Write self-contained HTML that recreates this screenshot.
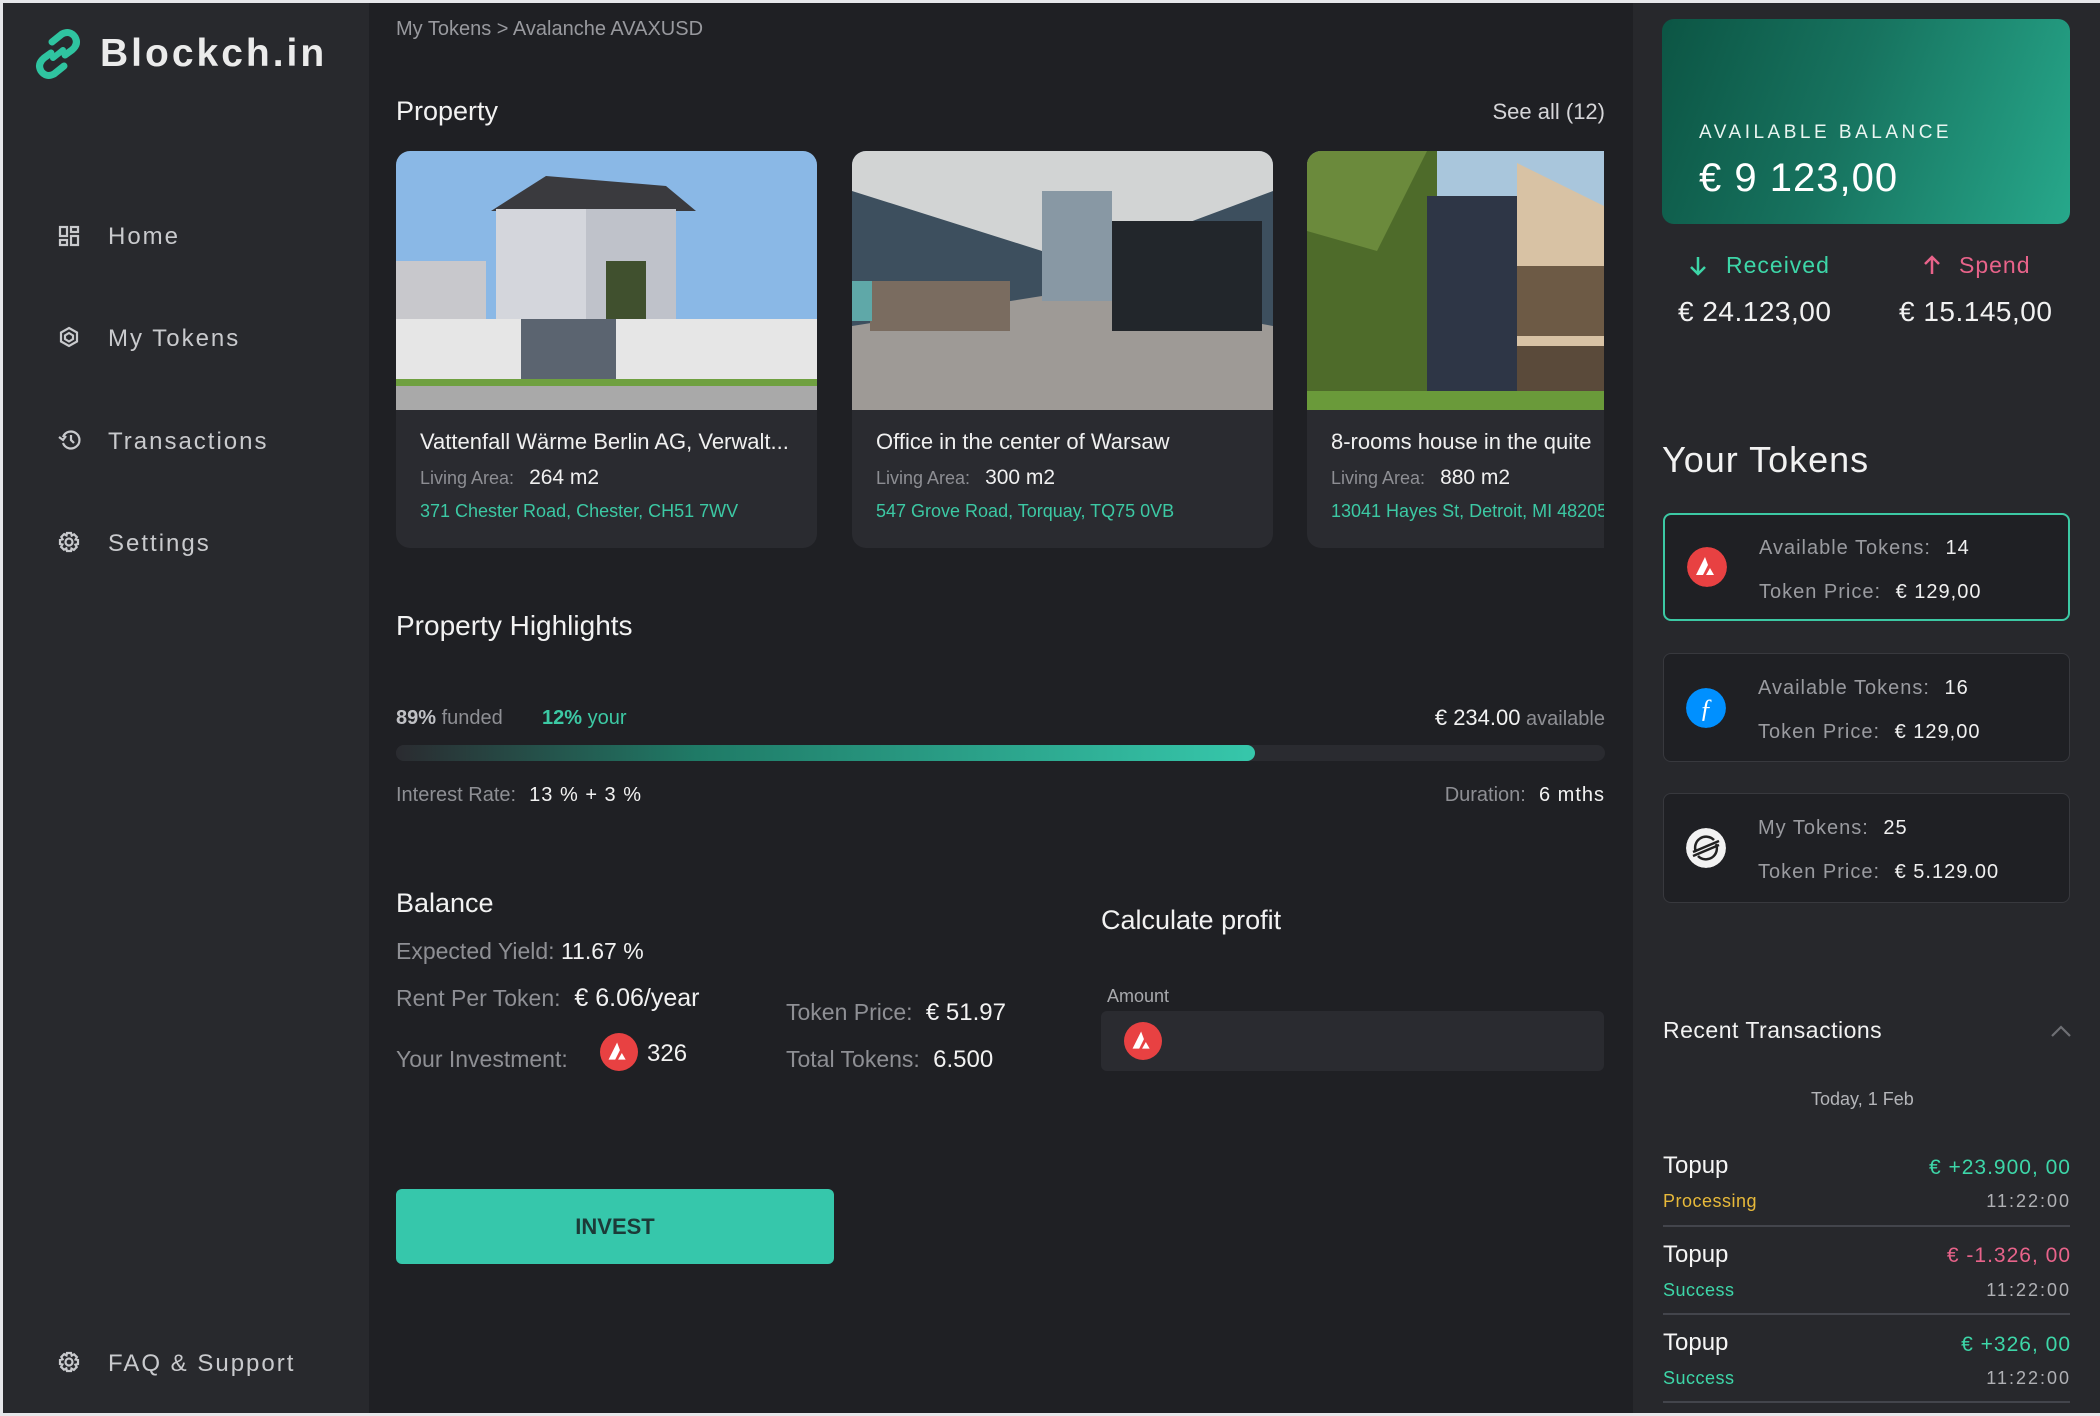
<!DOCTYPE html>
<html><head><meta charset="utf-8">
<style>
*{margin:0;padding:0;box-sizing:border-box}
body{width:2100px;height:1416px;background:#e6e7ea;position:relative;overflow:hidden;font-family:"Liberation Sans",sans-serif}
.a{position:absolute;white-space:nowrap;line-height:1}
#side{position:absolute;left:3px;top:3px;width:366px;height:1410px;background:#28292d}
#main{position:absolute;left:369px;top:3px;width:1264px;height:1410px;background:#1f2024}
#right{position:absolute;left:1633px;top:3px;width:1464px;height:1410px;background:#27282c}
.nav{color:#c9cacd;font-size:24px;letter-spacing:2px;left:108px}
.navi{position:absolute;left:58px}
.card{position:absolute;top:151px;height:397px;background:#2a2b30;border-radius:14px;overflow:hidden}
.img{position:absolute;left:0;top:0;right:0;height:259px}
.ct{color:#f0f0f0;font-size:22px;left:24px;top:280px}
.cl{left:24px;top:316px;font-size:18px;color:#8d8e93}
.cl b{font-weight:normal;color:#f0f0f0;font-size:21px;margin-left:10px}
.cad{left:24px;top:351px;font-size:18px;color:#3cc9a4}
.g{color:#8e8f94}
.w{color:#f2f2f2}
.tk{position:absolute;left:1663px;width:407px;background:#1f2024;border:1.5px solid #38393e;border-radius:8px}
.tk .ic{position:absolute;left:22px;width:40px;height:40px;border-radius:50%}
.tk .l1,.tk .l2{position:absolute;left:94px;font-size:20px;color:#9a9ba0;letter-spacing:1px;line-height:1;white-space:nowrap}
.tk b{font-weight:normal;color:#f0f0f0;margin-left:8px}
.tr{font-size:24px;color:#f5f5f5;left:1663px}
.st{font-size:18px;left:1663px;letter-spacing:.5px}
.am{font-size:21px;right:29px;letter-spacing:1px}
.tm{font-size:18px;right:29px;color:#b0b1b5;letter-spacing:2px}
.dv{position:absolute;left:1663px;width:407px;height:2px;background:#43454c}
</style></head><body>
<div id="side"></div><div id="main"></div><div id="right"></div>

<!-- logo -->
<svg class="a" style="left:32px;top:28px" width="52" height="52" viewBox="0 0 52 52">
<g fill="none" stroke="#2fc4a0" stroke-width="7" stroke-linecap="round">
<path d="M20 14 L30 6 Q38 2 43 9 Q47 16 40 22 L33 27"/>
<path d="M32 38 L22 46 Q14 50 9 43 Q5 36 12 30 L19 25"/>
<path d="M21 30 L31 22" stroke-width="6"/>
</g></svg>
<div class="a" style="left:100px;top:34px;font-size:39px;font-weight:bold;color:#ebebeb;letter-spacing:3px">Blockch.in</div>

<!-- nav -->
<svg class="navi" style="top:225px" width="22" height="22" viewBox="0 0 22 22" fill="none" stroke="#c9cacd" stroke-width="2.2"><rect x="2" y="2" width="7" height="9"/><rect x="13" y="2" width="7" height="5"/><rect x="2" y="15" width="7" height="5"/><rect x="13" y="11" width="7" height="9"/></svg>
<div class="a nav" style="top:225px">Home</div>
<svg class="navi" style="top:326px" width="22" height="22" viewBox="0 0 22 22" fill="none" stroke="#c9cacd" stroke-width="2.2"><path d="M11 2 L19 6.5 V15.5 L11 20 L3 15.5 V6.5 Z"/><path d="M11 7 L15 9.5 V13 L11 15.5 L7 13 V9.5 Z"/></svg>
<div class="a nav" style="top:327px">My Tokens</div>
<svg class="navi" style="top:429px" width="24" height="22" viewBox="0 0 24 22" fill="none" stroke="#c9cacd" stroke-width="2.2"><path d="M5 8 A8.5 8.5 0 1 1 5 14"/><path d="M1 8 L5 11 L8 7"/><path d="M13 6 V11 L16 14"/></svg>
<div class="a nav" style="top:430px">Transactions</div>
<svg class="navi" style="top:531px" width="22" height="22" viewBox="0 0 22 22" fill="none" stroke="#c9cacd" stroke-width="2.2"><circle cx="11" cy="11" r="3.5"/><path d="M9 2h4l.7 2.6 2.4-1.3 2.8 2.8-1.3 2.4L20 9v4l-2.6.7 1.3 2.4-2.8 2.8-2.4-1.3L13 20H9l-.7-2.6-2.4 1.3-2.8-2.8 1.3-2.4L2 13V9l2.6-.7-1.3-2.4 2.8-2.8 2.4 1.3z"/></svg>
<div class="a nav" style="top:532px">Settings</div>
<svg class="navi" style="top:1351px" width="22" height="22" viewBox="0 0 22 22" fill="none" stroke="#c9cacd" stroke-width="2.2"><circle cx="11" cy="11" r="3.5"/><path d="M9 2h4l.7 2.6 2.4-1.3 2.8 2.8-1.3 2.4L20 9v4l-2.6.7 1.3 2.4-2.8 2.8-2.4-1.3L13 20H9l-.7-2.6-2.4 1.3-2.8-2.8 1.3-2.4L2 13V9l2.6-.7-1.3-2.4 2.8-2.8 2.4 1.3z"/></svg>
<div class="a nav" style="top:1352px">FAQ &amp; Support</div>

<!-- main -->
<div class="a" style="left:396px;top:19px;font-size:20px;color:#98999e">My Tokens &gt; Avalanche AVAXUSD</div>
<div class="a w" style="left:396px;top:98px;font-size:27px">Property</div>
<div class="a" style="right:495px;top:101px;font-size:22px;color:#d5d5d8">See all (12)</div>

<div class="card" style="left:396px;width:421px">
 <svg class="img" width="421" height="259" viewBox="0 0 421 259" preserveAspectRatio="none">
  <rect width="421" height="259" fill="#8ab8e6"/>
  <rect y="180" width="421" height="79" fill="#d8d8d8"/>
  <rect y="232" width="421" height="27" fill="#a9a9a9"/>
  <rect y="225" width="421" height="10" fill="#6fa040"/>
  <rect x="0" y="110" width="90" height="80" fill="#c8c8cc"/>
  <path d="M95 60 L150 25 L270 35 L300 60 Z" fill="#3a3a3e"/>
  <rect x="100" y="58" width="175" height="130" fill="#d4d6dc"/>
  <rect x="190" y="58" width="90" height="130" fill="#bfc2ca"/>
  <rect x="210" y="110" width="40" height="80" fill="#40502e"/>
  <rect x="0" y="168" width="421" height="60" fill="#e6e6e6"/>
  <rect x="125" y="168" width="95" height="60" fill="#5b6470"/>
 </svg>
 <div class="a ct">Vattenfall Wärme Berlin AG, Verwalt...</div>
 <div class="a cl">Living Area: <b>264 m2</b></div>
 <div class="a cad">371 Chester Road, Chester, CH51 7WV</div>
</div>

<div class="card" style="left:852px;width:421px">
 <svg class="img" width="421" height="259" viewBox="0 0 421 259" preserveAspectRatio="none">
  <rect width="421" height="259" fill="#3d4f5e"/>
  <path d="M0 0 H421 V40 L260 100 H190 L0 40 Z" fill="#d2d4d4"/>
  <path d="M0 175 L190 145 H260 L421 175 V259 H0 Z" fill="#9e9a96"/>
  <rect x="190" y="40" width="70" height="110" fill="#8898a4"/>
  <rect x="260" y="70" width="150" height="110" fill="#22262b"/>
  <rect x="18" y="130" width="140" height="50" fill="#7a6c60"/>
  <rect x="0" y="130" width="20" height="40" fill="#5fa8a8"/>
 </svg>
 <div class="a ct">Office in the center of Warsaw</div>
 <div class="a cl">Living Area: <b>300 m2</b></div>
 <div class="a cad">547 Grove Road, Torquay, TQ75 0VB</div>
</div>

<div class="card" style="left:1307px;width:297px;border-radius:14px 0 0 14px">
 <svg class="img" width="297" height="259" viewBox="0 0 297 259" preserveAspectRatio="none">
  <rect width="297" height="259" fill="#a9c6dc"/>
  <rect x="0" y="0" width="130" height="259" fill="#4e6b2a"/>
  <path d="M0 0 H120 L90 60 L70 100 L0 80Z" fill="#6b8a3c"/>
  <rect x="120" y="45" width="90" height="200" fill="#2e3646"/>
  <path d="M210 12 L297 55 V240 H210 Z" fill="#d8c2a4"/>
  <rect x="210" y="115" width="87" height="70" fill="#6d5a45"/>
  <rect x="210" y="195" width="87" height="45" fill="#5a4a3a"/>
  <rect y="240" width="297" height="19" fill="#6a9a3a"/>
 </svg>
 <div class="a ct">8-rooms house in the quite</div>
 <div class="a cl">Living Area: <b>880 m2</b></div>
 <div class="a cad">13041 Hayes St, Detroit, MI 48205</div>
</div>

<div class="a w" style="left:396px;top:612px;font-size:28px">Property Highlights</div>
<div class="a" style="left:396px;top:708px;font-size:20px"><b style="color:#c0c1c5">89%</b><span class="g"> funded</span></div>
<div class="a" style="left:542px;top:708px;font-size:20px"><b style="color:#3cc9a4">12%</b><span style="color:#3cc9a4"> your</span></div>
<div class="a" style="right:495px;top:707px;font-size:22px"><span class="w">€ 234.00</span><span class="g" style="font-size:20px"> available</span></div>
<div style="position:absolute;left:396px;top:745px;width:1209px;height:16px;border-radius:8px;background:#2a2b30"></div>
<div style="position:absolute;left:396px;top:745px;width:859px;height:16px;border-radius:8px;background:linear-gradient(90deg,#2a2b30,#1f7a66 35%,#36c7ab)"></div>
<div class="a" style="left:396px;top:785px;font-size:20px"><span class="g">Interest Rate:</span><span class="w" style="letter-spacing:1px">&nbsp; 13 % + 3 %</span></div>
<div class="a" style="right:495px;top:785px;font-size:20px"><span class="g">Duration:</span><span class="w" style="letter-spacing:1px">&nbsp; 6 mths</span></div>

<div class="a w" style="left:396px;top:890px;font-size:27px">Balance</div>
<div class="a" style="left:396px;top:940px;font-size:23px"><span class="g">Expected Yield:</span><span class="w"> 11.67 %</span></div>
<div class="a" style="left:396px;top:986px;font-size:23px"><span class="g">Rent Per Token:</span><span class="w" style="font-size:25px">&nbsp; € 6.06/year</span></div>
<div class="a" style="left:396px;top:1048px;font-size:23px"><span class="g">Your Investment:</span></div>
<svg class="a" style="left:600px;top:1033px" width="38" height="38" viewBox="0 0 40 40"><circle cx="20" cy="20" r="20" fill="#e84142"/><path d="M18 10 L9 28 H16 L21 18 Z M23 21 L19 28 H27 Z" fill="#fff"/></svg>
<div class="a w" style="left:647px;top:1042px;font-size:24px">326</div>
<div class="a" style="left:786px;top:1001px;font-size:23px"><span class="g">Token Price:</span><span class="w" style="font-size:24px">&nbsp; € 51.97</span></div>
<div class="a" style="left:786px;top:1048px;font-size:23px"><span class="g">Total Tokens:</span><span class="w" style="font-size:24px">&nbsp; 6.500</span></div>

<div class="a w" style="left:1101px;top:907px;font-size:27px">Calculate profit</div>
<div class="a" style="left:1107px;top:987px;font-size:18px;color:#a8a9ad">Amount</div>
<div style="position:absolute;left:1101px;top:1011px;width:503px;height:60px;border-radius:6px;background:#2a2b30"></div>
<svg class="a" style="left:1124px;top:1022px" width="38" height="38" viewBox="0 0 40 40"><circle cx="20" cy="20" r="20" fill="#e84142"/><path d="M18 10 L9 28 H16 L21 18 Z M23 21 L19 28 H27 Z" fill="#fff"/></svg>

<div style="position:absolute;left:396px;top:1189px;width:438px;height:75px;border-radius:6px;background:#36c7ab;color:#1c3b38;font-size:22px;font-weight:bold;text-align:center;line-height:75px">INVEST</div>

<!-- right -->
<div style="position:absolute;left:1662px;top:19px;width:408px;height:205px;border-radius:12px;background:linear-gradient(110deg,#0c5544 0%,#17735f 45%,#27a88b 100%)"></div>
<div class="a" style="left:1699px;top:123px;font-size:19px;color:#eaf5f1;letter-spacing:3.5px">AVAILABLE BALANCE</div>
<div class="a" style="left:1699px;top:158px;font-size:40px;color:#fff;letter-spacing:1px">€ 9 123,00</div>

<svg class="a" style="left:1688px;top:255px" width="20" height="22" viewBox="0 0 20 22" fill="none" stroke="#3dd6a8" stroke-width="2.5"><path d="M10 2 V19 M3 12 L10 19 L17 12"/></svg>
<div class="a" style="left:1726px;top:254px;font-size:23px;color:#3dd6a8;letter-spacing:1px">Received</div>
<svg class="a" style="left:1922px;top:254px" width="20" height="22" viewBox="0 0 20 22" fill="none" stroke="#e8638a" stroke-width="2.5"><path d="M10 20 V3 M3 10 L10 3 L17 10"/></svg>
<div class="a" style="left:1959px;top:254px;font-size:23px;color:#e8638a;letter-spacing:1px">Spend</div>
<div class="a w" style="left:1678px;top:298px;font-size:28px;letter-spacing:.5px">€ 24.123,00</div>
<div class="a w" style="left:1899px;top:298px;font-size:28px;letter-spacing:.5px">€ 15.145,00</div>

<div class="a w" style="left:1662px;top:442px;font-size:36px;letter-spacing:1px">Your Tokens</div>

<div class="tk" style="top:513px;height:108px;border:2.5px solid #3cc9a4">
 <svg class="ic" style="top:32px" viewBox="0 0 40 40"><circle cx="20" cy="20" r="20" fill="#e84142"/><path d="M18 10 L9 28 H16 L21 18 Z M23 21 L19 28 H27 Z" fill="#fff"/></svg>
 <div class="l1" style="top:23px">Available Tokens: <b>14</b></div>
 <div class="l2" style="top:67px">Token Price: <b>€ 129,00</b></div>
</div>
<div class="tk" style="top:653px;height:109px">
 <svg class="ic" style="top:34px" viewBox="0 0 40 40"><circle cx="20" cy="20" r="20" fill="#0090ff"/><text x="20" y="29" text-anchor="middle" font-family="Liberation Serif,serif" font-style="italic" font-size="26" fill="#fff">ƒ</text></svg>
 <div class="l1" style="top:24px">Available Tokens: <b>16</b></div>
 <div class="l2" style="top:68px">Token Price: <b>€ 129,00</b></div>
</div>
<div class="tk" style="top:793px;height:110px">
 <svg class="ic" style="top:34px" viewBox="0 0 40 40"><circle cx="20" cy="20" r="20" fill="#f2f2f2"/><g fill="none" stroke="#222" stroke-width="2.5"><path d="M10 24 A11 11 0 0 1 28 12"/><path d="M30 16 A11 11 0 0 1 12 28"/><path d="M7 24 L33 13"/><path d="M7 28 L33 17"/></g></svg>
 <div class="l1" style="top:24px">My Tokens: <b>25</b></div>
 <div class="l2" style="top:68px">Token Price: <b>€ 5.129.00</b></div>
</div>

<div class="a w" style="left:1663px;top:1019px;font-size:23px;letter-spacing:.5px">Recent Transactions</div>
<svg class="a" style="left:2050px;top:1024px" width="22" height="14" viewBox="0 0 22 14" fill="none" stroke="#6e6f74" stroke-width="2.2"><path d="M2 12 L11 3 L20 12"/></svg>
<div class="a" style="left:1811px;top:1090px;font-size:18px;color:#b4b5b9">Today, 1 Feb</div>

<div class="a tr" style="top:1154px">Topup</div>
<div class="a am" style="top:1157px;color:#3dd6a8">€ +23.900, 00</div>
<div class="a st" style="top:1192px;color:#e7b93a">Processing</div>
<div class="a tm" style="top:1192px">11:22:00</div>
<div class="dv" style="top:1225px"></div>

<div class="a tr" style="top:1243px">Topup</div>
<div class="a am" style="top:1245px;color:#e8638a">€ -1.326, 00</div>
<div class="a st" style="top:1281px;color:#3dd6a8">Success</div>
<div class="a tm" style="top:1281px">11:22:00</div>
<div class="dv" style="top:1313px"></div>

<div class="a tr" style="top:1331px">Topup</div>
<div class="a am" style="top:1334px;color:#3dd6a8">€ +326, 00</div>
<div class="a st" style="top:1369px;color:#3dd6a8">Success</div>
<div class="a tm" style="top:1369px">11:22:00</div>
<div class="dv" style="top:1401px"></div>
</body></html>
